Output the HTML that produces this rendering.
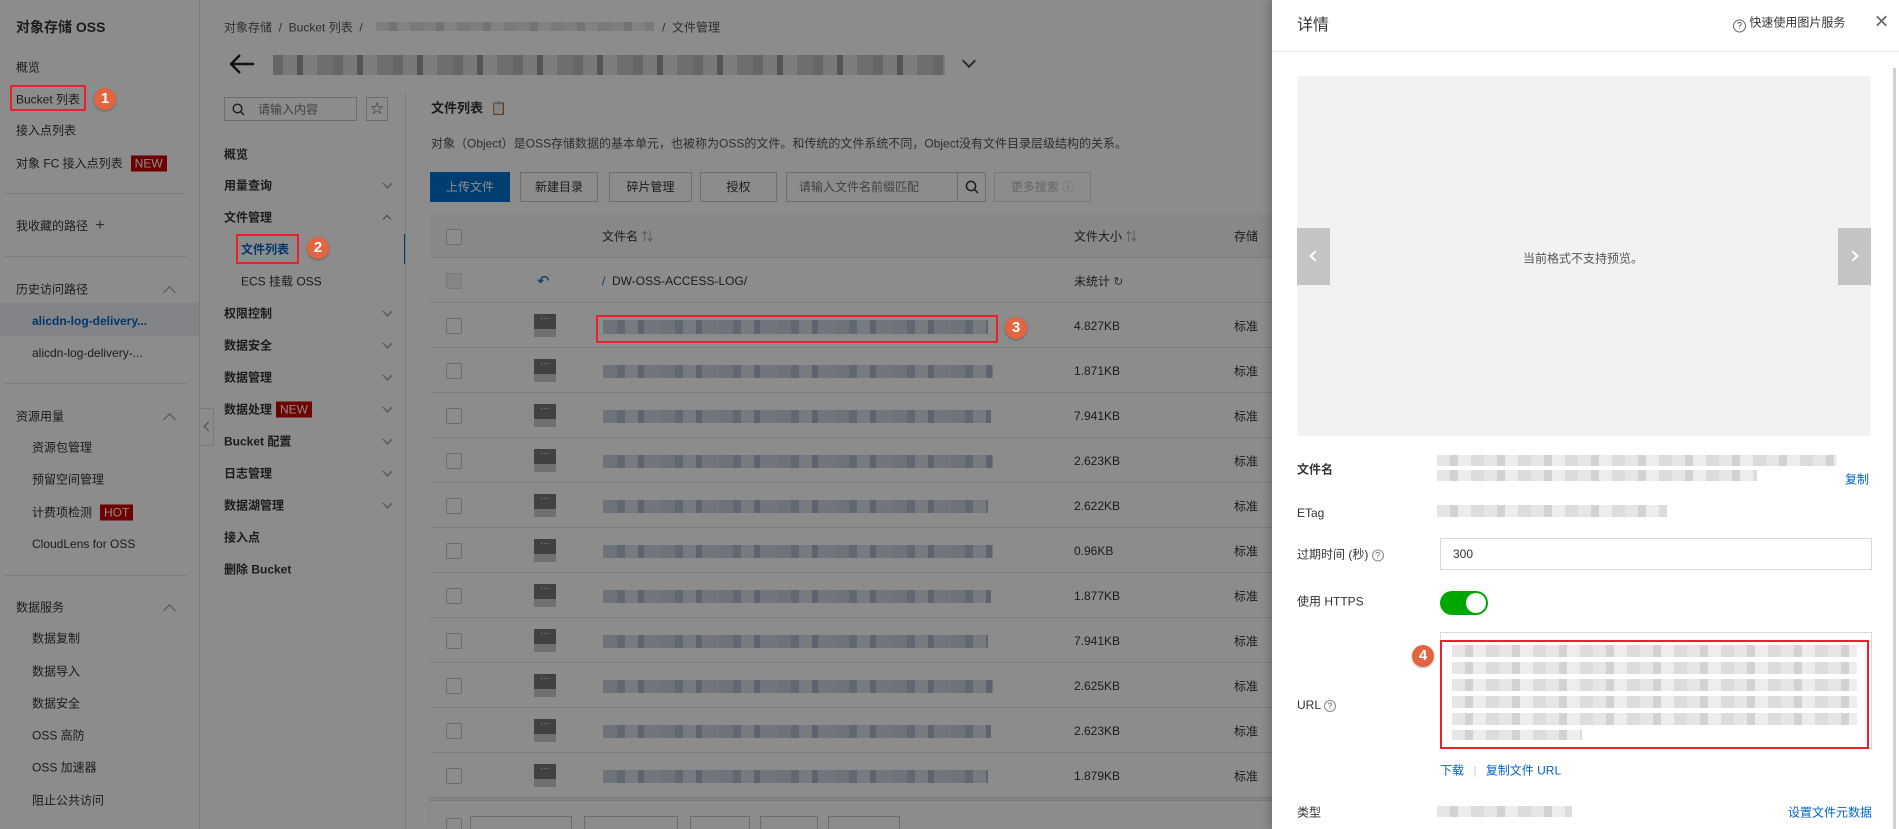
<!DOCTYPE html>
<html style="height:829px;overflow:hidden"><head><meta charset="utf-8"><style>
*{box-sizing:border-box;margin:0;padding:0}
body{width:1899px;height:829px;overflow:hidden;position:relative;background:#fff;font-family:"Liberation Sans","Noto Sans CJK SC",sans-serif;font-size:12px;color:#333}
.a{position:absolute;white-space:nowrap}
.t{transform:translateY(-50%)}
.side .a{font-size:12px}
.b{font-weight:bold}
.div{position:absolute;height:1px;background:#e3e3e3}
.chev{position:absolute;width:7px;height:7px;border-right:1px solid #888;border-bottom:1px solid #888;transform:rotate(45deg)}
.chevu{position:absolute;width:9px;height:9px;border-left:1px solid #999;border-top:1px solid #999;transform:rotate(45deg)}
.tag{background:#c80000;color:#fff;padding:0 4px;font-size:12px;line-height:16px;display:inline-block;margin-left:8px}
.btn{position:absolute;top:172px;height:30px;border:1px solid #c4c6cf;background:#fff;text-align:center;line-height:28px;font-size:12px;color:#333;overflow:hidden}
.cb{position:absolute;width:16px;height:16px;border:1px solid #c4c6cf;border-radius:2px;background:#fff}
.row{position:absolute;left:430px;width:842px;height:45px;border-bottom:1px solid #e6e6e6}
.ic{position:absolute;left:534px;width:22px;height:23px;background:linear-gradient(#777 0,#777 65%,#ccc 65%);color:#fff;font-size:10px;text-align:center;line-height:10px}
.blur{position:absolute;background:repeating-linear-gradient(90deg,#c9d1de 0 14px,#b2bdd0 14px 22px,#d9dee7 22px 35px,#a9b6cc 35px 41px,#cfd6e2 41px 58px)}
.blurg{position:absolute;background:repeating-linear-gradient(90deg,#e6e6e6 0 13px,#d2d2d2 13px 21px,#ededed 21px 34px,#dcdcdc 34px 47px)}
.red{position:absolute;border:2px solid #e8212b}
.num{position:absolute;width:22px;height:22px;border-radius:50%;background:#e2653f;color:#fff;font-weight:bold;font-size:15px;text-align:center;line-height:22px;box-shadow:0 1px 2px rgba(0,0,0,.3)}
.lbl{position:absolute;left:1297px;font-size:12px;color:#333}
</style></head><body>

<div class="side">
<div class="a t b" style="left:16px;top:27px;font-size:14px">对象存储 OSS</div>
<div class="a t" style="left:16px;top:67px">概览</div>
<div class="a t" style="left:16px;top:99px">Bucket 列表</div>
<div class="a t" style="left:16px;top:130px">接入点列表</div>
<div class="a t" style="left:16px;top:163px">对象 FC 接入点列表<span class="tag">NEW</span></div>
<div class="div" style="left:4px;top:193px;width:183px"></div>
<div class="a t" style="left:16px;top:226px">我收藏的路径 <span style="font-size:16px;color:#555;margin-left:4px">+</span></div>
<div class="div" style="left:4px;top:256px;width:183px"></div>
<div class="a t" style="left:16px;top:289px">历史访问路径</div>
<div class="chevu" style="left:165px;top:288px"></div>
<div class="a" style="left:0;top:303px;width:199px;height:33px;background:#eef1f6"></div>
<div class="a t b" style="left:32px;top:321px;color:#0064c8">alicdn-log-delivery...</div>
<div class="a t" style="left:32px;top:353px">alicdn-log-delivery-...</div>
<div class="div" style="left:4px;top:383px;width:183px"></div>
<div class="a t" style="left:16px;top:416px">资源用量</div>
<div class="chevu" style="left:165px;top:415px"></div>
<div class="a t" style="left:32px;top:447px">资源包管理</div>
<div class="a t" style="left:32px;top:479px">预留空间管理</div>
<div class="a t" style="left:32px;top:512px">计费项检测<span class="tag" style="margin-left:8px">HOT</span></div>
<div class="a t" style="left:32px;top:544px">CloudLens for OSS</div>
<div class="div" style="left:4px;top:575px;width:183px"></div>
<div class="a t" style="left:16px;top:607px">数据服务</div>
<div class="chevu" style="left:165px;top:606px"></div>
<div class="a t" style="left:32px;top:638px">数据复制</div>
<div class="a t" style="left:32px;top:671px">数据导入</div>
<div class="a t" style="left:32px;top:703px">数据安全</div>
<div class="a t" style="left:32px;top:735px">OSS 高防</div>
<div class="a t" style="left:32px;top:767px">OSS 加速器</div>
<div class="a t" style="left:32px;top:800px">阻止公共访问</div>
</div>
<div class="a" style="left:199px;top:0;width:1px;height:829px;background:#e0e0e0"></div>
<div class="a" style="left:200px;top:408px;width:14px;height:38px;border:1px solid #ddd;background:#fff;border-left:none"></div>
<div class="a" style="left:205px;top:423px;width:7px;height:7px;border-left:1px solid #888;border-bottom:1px solid #888;transform:rotate(45deg)"></div>

<div class="a t" style="left:224px;top:27px;color:#555">对象存储 &nbsp;/&nbsp; Bucket 列表 &nbsp;/</div>
<div class="blurg" style="left:376px;top:22px;width:278px;height:9px"></div>
<div class="a t" style="left:662px;top:27px;color:#555">/ &nbsp;文件管理</div>
<svg class="a" style="left:228px;top:53px" width="28" height="22" viewBox="0 0 28 22"><path d="M26 11H3M12 2L3 11l9 9" stroke="#222" stroke-width="2.4" fill="none"/></svg>
<div class="blurg" style="left:273px;top:55px;width:672px;height:20px;background:repeating-linear-gradient(90deg,#bbb 0 10px,#ddd 10px 24px,#999 24px 30px,#e4e4e4 30px 44px,#c9c9c9 44px 60px)"></div>
<div class="a" style="left:964px;top:56px;width:10px;height:10px;border-right:2px solid #555;border-bottom:2px solid #555;transform:rotate(45deg)"></div>

<div class="a" style="left:224px;top:97px;width:133px;height:24px;border:1px solid #c4c6cf"></div>
<svg class="a" style="left:232px;top:103px" width="13" height="13"><circle cx="5.5" cy="5.5" r="4.3" stroke="#333" stroke-width="1.4" fill="none"/><path d="M9 9l3 3" stroke="#333" stroke-width="1.4"/></svg>
<div class="a t" style="left:258px;top:109px;color:#777">请输入内容</div>
<div class="a" style="left:366px;top:97px;width:22px;height:24px;border:1px solid #c4c6cf;text-align:center;line-height:22px;font-size:13px;color:#555">☆</div>
<div class="a t b" style="left:224px;top:154px">概览</div>
<div class="a t b" style="left:224px;top:185px">用量查询</div><div class="chev" style="left:384px;top:180px"></div>
<div class="a t b" style="left:224px;top:217px">文件管理</div><div class="chevu" style="left:384px;top:216px;width:6px;height:6px;border-color:#777"></div>
<div class="a t b" style="left:241px;top:249px;color:#0064c8">文件列表</div>
<div class="a" style="left:404px;top:234px;width:2px;height:30px;background:#0064c8"></div>
<div class="a t" style="left:241px;top:281px">ECS 挂载 OSS</div>
<div class="a t b" style="left:224px;top:313px">权限控制</div><div class="chev" style="left:384px;top:308px"></div>
<div class="a t b" style="left:224px;top:345px">数据安全</div><div class="chev" style="left:384px;top:340px"></div>
<div class="a t b" style="left:224px;top:377px">数据管理</div><div class="chev" style="left:384px;top:372px"></div>
<div class="a t b" style="left:224px;top:409px">数据处理<span class="tag" style="font-weight:normal;margin-left:4px">NEW</span></div><div class="chev" style="left:384px;top:404px"></div>
<div class="a t b" style="left:224px;top:441px">Bucket 配置</div><div class="chev" style="left:384px;top:436px"></div>
<div class="a t b" style="left:224px;top:473px">日志管理</div><div class="chev" style="left:384px;top:468px"></div>
<div class="a t b" style="left:224px;top:505px">数据湖管理</div><div class="chev" style="left:384px;top:500px"></div>
<div class="a t b" style="left:224px;top:537px">接入点</div>
<div class="a t b" style="left:224px;top:569px">删除 Bucket</div>
<div class="a" style="left:405px;top:92px;width:1px;height:737px;background:#e0e0e0"></div>

<div class="a t b" style="left:431px;top:107px;font-size:13px">文件列表 <span style="color:#0064c8;font-weight:normal;margin-left:4px">&#128203;</span></div>
<div class="a t" style="left:431px;top:143px;color:#555">对象（Object）是OSS存储数据的基本单元，也被称为OSS的文件。和传统的文件系统不同，Object没有文件目录层级结构的关系。</div>
<div class="btn" style="left:430px;width:80px;background:#0070cc;border-color:#0070cc;color:#fff">上传文件</div>
<div class="btn" style="left:520px;width:78px">新建目录</div>
<div class="btn" style="left:609px;width:83px">碎片管理</div>
<div class="btn" style="left:700px;width:77px">授权</div>
<div class="btn" style="left:786px;width:172px;text-align:left;padding-left:12px;color:#777">请输入文件名前缀匹配</div>
<div class="btn" style="left:957px;width:29px"><svg width="14" height="14" style="margin-top:7px"><circle cx="6" cy="6" r="4.6" stroke="#333" stroke-width="1.5" fill="none"/><path d="M9.5 9.5l3.5 3.5" stroke="#333" stroke-width="1.5"/></svg></div>
<div class="btn" style="left:994px;width:97px;color:#bbb;border-color:#ddd">更多搜索 ⓘ</div>

<div class="a" style="left:430px;top:214px;width:842px;height:44px;background:#f5f7fa;border-bottom:1px solid #e6e6e6"></div>
<div class="cb" style="left:446px;top:229px"></div>
<div class="a t" style="left:602px;top:236px">文件名 <span style="color:#999">⇅</span></div>
<div class="a t" style="left:1074px;top:236px">文件大小 <span style="color:#999">⇅</span></div>
<div class="a t" style="left:1234px;top:236px">存储</div>

<div class="row" style="top:258px"></div>
<div class="cb" style="left:446px;top:273px;background:#f2f2f2;border-color:#ddd"></div>
<div class="a t" style="left:537px;top:281px;color:#0064c8;font-size:15px">↶</div>
<div class="a t" style="left:602px;top:281px;color:#333"><span style="color:#0064c8">/</span>&nbsp; DW-OSS-ACCESS-LOG/</div>
<div class="a t" style="left:1074px;top:281px">未统计 <span style="color:#555">↻</span></div>

<div class="row" style="top:303px"></div><div class="cb" style="left:446px;top:318px"></div><div class="ic" style="top:314px">···</div><div class="blur" style="left:603px;top:320px;width:385px;height:14px"></div><div class="a t" style="left:1074px;top:326px">4.827KB</div><div class="a t" style="left:1234px;top:326px">标准</div>
<div class="row" style="top:348px"></div><div class="cb" style="left:446px;top:363px"></div><div class="ic" style="top:359px">···</div><div class="blur" style="left:603px;top:365px;width:390px;height:13px"></div><div class="a t" style="left:1074px;top:371px">1.871KB</div><div class="a t" style="left:1234px;top:371px">标准</div>
<div class="row" style="top:393px"></div><div class="cb" style="left:446px;top:408px"></div><div class="ic" style="top:404px">···</div><div class="blur" style="left:603px;top:410px;width:388px;height:13px"></div><div class="a t" style="left:1074px;top:416px">7.941KB</div><div class="a t" style="left:1234px;top:416px">标准</div>
<div class="row" style="top:438px"></div><div class="cb" style="left:446px;top:453px"></div><div class="ic" style="top:449px">···</div><div class="blur" style="left:603px;top:455px;width:390px;height:13px"></div><div class="a t" style="left:1074px;top:461px">2.623KB</div><div class="a t" style="left:1234px;top:461px">标准</div>
<div class="row" style="top:483px"></div><div class="cb" style="left:446px;top:498px"></div><div class="ic" style="top:494px">···</div><div class="blur" style="left:603px;top:500px;width:385px;height:13px"></div><div class="a t" style="left:1074px;top:506px">2.622KB</div><div class="a t" style="left:1234px;top:506px">标准</div>
<div class="row" style="top:528px"></div><div class="cb" style="left:446px;top:543px"></div><div class="ic" style="top:539px">···</div><div class="blur" style="left:603px;top:545px;width:390px;height:13px"></div><div class="a t" style="left:1074px;top:551px">0.96KB</div><div class="a t" style="left:1234px;top:551px">标准</div>
<div class="row" style="top:573px"></div><div class="cb" style="left:446px;top:588px"></div><div class="ic" style="top:584px">···</div><div class="blur" style="left:603px;top:590px;width:388px;height:13px"></div><div class="a t" style="left:1074px;top:596px">1.877KB</div><div class="a t" style="left:1234px;top:596px">标准</div>
<div class="row" style="top:618px"></div><div class="cb" style="left:446px;top:633px"></div><div class="ic" style="top:629px">···</div><div class="blur" style="left:603px;top:635px;width:385px;height:13px"></div><div class="a t" style="left:1074px;top:641px">7.941KB</div><div class="a t" style="left:1234px;top:641px">标准</div>
<div class="row" style="top:663px"></div><div class="cb" style="left:446px;top:678px"></div><div class="ic" style="top:674px">···</div><div class="blur" style="left:603px;top:680px;width:390px;height:13px"></div><div class="a t" style="left:1074px;top:686px">2.625KB</div><div class="a t" style="left:1234px;top:686px">标准</div>
<div class="row" style="top:708px"></div><div class="cb" style="left:446px;top:723px"></div><div class="ic" style="top:719px">···</div><div class="blur" style="left:603px;top:725px;width:388px;height:13px"></div><div class="a t" style="left:1074px;top:731px">2.623KB</div><div class="a t" style="left:1234px;top:731px">标准</div>
<div class="row" style="top:753px"></div><div class="cb" style="left:446px;top:768px"></div><div class="ic" style="top:764px">···</div><div class="blur" style="left:603px;top:770px;width:385px;height:13px"></div><div class="a t" style="left:1074px;top:776px">1.879KB</div><div class="a t" style="left:1234px;top:776px">标准</div>

<div class="a" style="left:430px;top:800px;width:842px;height:29px;background:#fff;border-top:1px solid #ddd;box-shadow:0 -2px 4px rgba(0,0,0,.08)"></div>
<div class="cb" style="left:446px;top:818px;height:11px;border-bottom:none"></div>
<div class="btn" style="left:470px;top:816px;width:102px;height:13px;line-height:28px;border-bottom:none"></div>
<div class="btn" style="left:584px;top:816px;width:94px;height:13px;border-bottom:none"></div>
<div class="btn" style="left:690px;top:816px;width:60px;height:13px;border-bottom:none"></div>
<div class="btn" style="left:760px;top:816px;width:58px;height:13px;border-bottom:none"></div>
<div class="btn" style="left:828px;top:816px;width:72px;height:13px;border-bottom:none"></div>

<div class="a" style="left:0;top:0;width:1272px;height:829px;background:rgba(0,0,0,.45)"></div>

<div class="red" style="left:10px;top:85px;width:76px;height:26px"></div>
<div class="num" style="left:94px;top:88px">1</div>
<div class="red" style="left:236px;top:234px;width:63px;height:30px"></div>
<div class="num" style="left:307px;top:237px">2</div>
<div class="red" style="left:596px;top:315px;width:402px;height:28px"></div>
<div class="num" style="left:1005px;top:317px">3</div>

<div class="a" style="left:1272px;top:0;width:627px;height:829px;background:#fff;box-shadow:-3px 0 8px rgba(0,0,0,.2)"></div>
<div class="a t" style="left:1297px;top:23px;font-size:16px;color:#333">详情</div>
<div class="a t" style="left:1733px;top:23px;color:#333"><span style="display:inline-block;width:13px;height:13px;border:1px solid #666;border-radius:50%;font-size:9px;text-align:center;line-height:11px;vertical-align:-2px">?</span> 快速使用图片服务</div>
<div class="a t" style="left:1874px;top:22px;font-size:18px;color:#666">✕</div>
<div class="a" style="left:1272px;top:51px;width:627px;height:1px;background:#e6e6e6"></div>
<div class="a" style="left:1893px;top:68px;width:3px;height:761px;background:#d0d0d0"></div>
<div class="a" style="left:1297px;top:76px;width:574px;height:360px;background:#f2f2f2"></div>
<div class="a t" style="left:1523px;top:258px;color:#555;font-size:12px">当前格式不支持预览。</div>
<div class="a" style="left:1297px;top:228px;width:33px;height:57px;background:#c4c4c4"></div>
<div class="a" style="left:1311px;top:252px;width:8px;height:8px;border-left:2px solid #fff;border-bottom:2px solid #fff;transform:rotate(45deg)"></div>
<div class="a" style="left:1838px;top:228px;width:33px;height:57px;background:#c4c4c4"></div>
<div class="a" style="left:1849px;top:252px;width:8px;height:8px;border-right:2px solid #fff;border-top:2px solid #fff;transform:rotate(45deg)"></div>

<div class="lbl t b" style="top:469px;font-weight:bold">文件名</div>
<div class="blurg" style="left:1437px;top:455px;width:400px;height:11px"></div>
<div class="blurg" style="left:1437px;top:470px;width:320px;height:11px"></div>
<div class="a t" style="left:1845px;top:479px;color:#0064c8">复制</div>
<div class="lbl t" style="top:513px">ETag</div>
<div class="blurg" style="left:1437px;top:505px;width:230px;height:12px"></div>
<div class="lbl t" style="top:554px">过期时间 (秒) <span style="display:inline-block;width:12px;height:12px;border:1px solid #888;border-radius:50%;font-size:9px;text-align:center;line-height:10px;color:#666">?</span></div>
<div class="a" style="left:1440px;top:538px;width:432px;height:32px;border:1px solid #d9d9d9"></div>
<div class="a t" style="left:1453px;top:554px">300</div>
<div class="lbl t" style="top:601px">使用 HTTPS</div>
<div class="a" style="left:1440px;top:591px;width:48px;height:24px;border-radius:12px;background:#00a700"></div>
<div class="a" style="left:1466px;top:593px;width:20px;height:20px;border-radius:50%;background:#fff"></div>
<div class="a" style="left:1440px;top:632px;width:432px;height:117px;border:1px solid #d9d9d9"></div>
<div class="blurg" style="left:1452px;top:645px;width:405px;height:12px"></div>
<div class="blurg" style="left:1452px;top:662px;width:405px;height:12px"></div>
<div class="blurg" style="left:1452px;top:679px;width:405px;height:12px"></div>
<div class="blurg" style="left:1452px;top:696px;width:405px;height:12px"></div>
<div class="blurg" style="left:1452px;top:713px;width:405px;height:12px"></div>
<div class="blurg" style="left:1452px;top:730px;width:130px;height:10px"></div>
<div class="red" style="left:1440px;top:640px;width:429px;height:109px"></div>
<div class="num" style="left:1412px;top:645px">4</div>
<div class="lbl t" style="top:705px">URL <span style="display:inline-block;width:12px;height:12px;border:1px solid #888;border-radius:50%;font-size:9px;text-align:center;line-height:10px;color:#666">?</span></div>
<div class="a t" style="left:1440px;top:770px;color:#0064c8">下载 <span style="color:#ccc;margin:0 6px">|</span> 复制文件 URL</div>
<div class="lbl t" style="top:812px">类型</div>
<div class="blurg" style="left:1437px;top:806px;width:135px;height:11px"></div>
<div class="a t" style="left:1788px;top:812px;color:#0064c8">设置文件元数据</div>
</body></html>
